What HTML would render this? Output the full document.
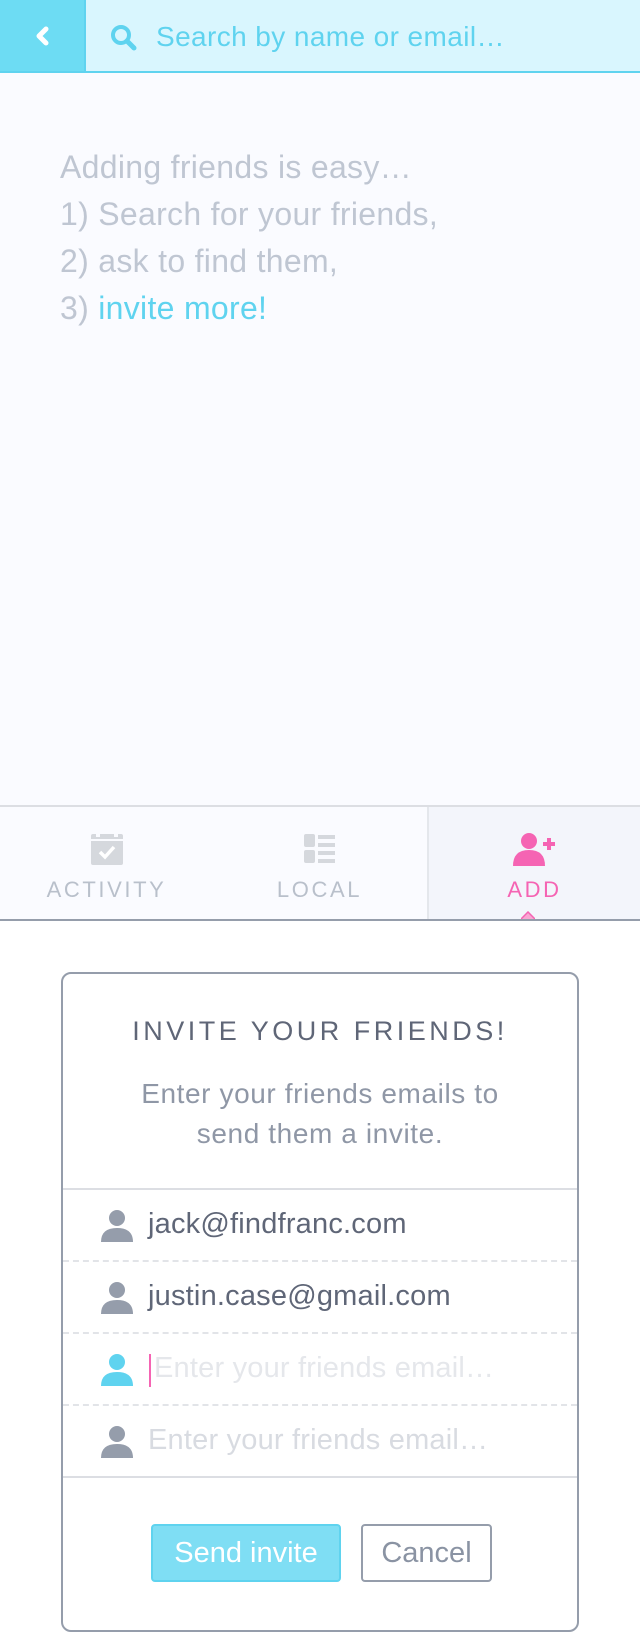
<!DOCTYPE html>
<html><head><meta charset="utf-8"><style>
*{margin:0;padding:0;box-sizing:border-box}
body{width:640px;height:1634px;background:#fff;font-family:"Liberation Sans",sans-serif;position:relative;overflow:hidden}
.top{position:absolute;left:0;top:0;width:640px;height:73px;background:#d9f6fe;border-bottom:2px solid #5fd3ef}
.back{position:absolute;left:0;top:0;width:86px;height:71px;background:#6ddcf3;border-right:2px solid #5fd3ef}
.ph{position:absolute;left:156px;top:21px;font-size:28px;color:#5fd3ef;letter-spacing:0.4px}
.main{position:absolute;left:0;top:73px;width:640px;height:732px;background:#fafbff}
.intro{position:absolute;left:60px;top:144px;font-size:32px;line-height:47px;color:#bfc6d2;letter-spacing:0.3px}
.intro span{color:#5fd3ef}
.tabs{position:absolute;left:0;top:805px;width:640px;height:116px;background:#fafbff;border-top:2px solid #dcdee3;border-bottom:2px solid #959dab}
.tab{position:absolute;top:0;width:213px;height:112px;text-align:center}
.tab .lbl{position:absolute;left:0;right:0;top:70px;font-size:22px;letter-spacing:2.6px;color:#b9c0cb}
.tab svg{position:absolute;left:50%;top:25px;transform:translateX(-50%)}
.card{position:absolute;left:61px;top:972px;width:518px;height:660px;border:2px solid #959dab;border-radius:10px;background:#fff}
.title{position:absolute;left:0;right:0;top:42px;text-align:center;font-size:27px;letter-spacing:3.5px;color:#5f6677}
.sub{position:absolute;left:0;right:0;top:100px;text-align:center;font-size:28px;line-height:40px;color:#8f97a6;letter-spacing:0.6px}
.row{position:absolute;left:0;width:514px;height:72px}
.row .t{position:absolute;left:85px;top:18px;font-size:29px;color:#5f6677;letter-spacing:0.2px}
.row svg{position:absolute;left:38px;top:19px}
.btn{position:absolute;top:550px;height:58px;border-radius:4px;font-size:29px;text-align:center;line-height:54px}
</style></head><body>
<div class="top">
 <div class="back"><svg width="86" height="71"><path d="M46 29 L39 36 L46 43" stroke="#fff" stroke-width="5" fill="none" stroke-linecap="round" stroke-linejoin="round"/></svg></div>
 <svg style="position:absolute;left:110px;top:24px" width="28" height="28"><circle cx="11" cy="11" r="8" stroke="#5fd3ef" stroke-width="4" fill="none"/><path d="M17 17 L24 24" stroke="#5fd3ef" stroke-width="5" stroke-linecap="round"/></svg>
 <div class="ph">Search by name or email…</div>
</div>
<div class="main"></div>
<div class="intro">Adding friends is easy…<br>1) Search for your friends,<br>2) ask to find them,<br>3) <span>invite more!</span></div>
<div class="tabs">
 <div class="tab" style="left:0"><svg width="34" height="34"><rect x="1" y="2" width="32" height="31" rx="2" fill="#d5d8dd"/><rect x="6" y="0" width="4" height="5" fill="#fafbff"/><rect x="24" y="0" width="4" height="5" fill="#fafbff"/><rect x="1" y="7" width="32" height="2" fill="#fafbff"/><path d="M10 20 L15 25 L24 15" stroke="#fff" stroke-width="3.5" fill="none"/></svg><div class="lbl">ACTIVITY</div></div>
 <div class="tab" style="left:213px"><svg width="34" height="34"><rect x="1" y="2" width="11" height="13" rx="2" fill="#d5d8dd"/><rect x="1" y="18" width="11" height="13" rx="2" fill="#d5d8dd"/><rect x="15" y="3" width="17" height="4" fill="#d5d8dd"/><rect x="15" y="11" width="17" height="4" fill="#d5d8dd"/><rect x="15" y="19" width="17" height="4" fill="#d5d8dd"/><rect x="15" y="27" width="17" height="4" fill="#d5d8dd"/></svg><div class="lbl">LOCAL</div></div>
 <div class="tab" style="left:427px;width:213px;border-left:2px solid #e4e7ec;background:#f3f5fb"><svg width="44" height="36" style="left:50%"><circle cx="16" cy="9" r="8" fill="#f564b3"/><path d="M0 34 Q0 18 16 18 Q32 18 32 34 Z" fill="#f564b3"/><path d="M36 6 V18 M30 12 H42" stroke="#f564b3" stroke-width="4"/></svg><div class="lbl" style="color:#f564b3">ADD</div>
 <svg style="position:absolute;left:99px;top:104px" width="14" height="8"><path d="M0 8 L7 1 L14 8" fill="#f9a6d3" stroke="#f564b3" stroke-width="1.5"/></svg></div>
</div>
<div class="card">
 <div class="title">INVITE YOUR FRIENDS!</div>
 <div class="sub">Enter your friends emails to<br>send them a invite.</div>
 <div style="position:absolute;left:0;right:0;top:214px;border-top:2px solid #dcdee3"></div>
 <div class="row" style="top:216px"><svg width="32" height="34"><circle cx="16" cy="9" r="8" fill="#959dab"/><path d="M0 33 Q0 19 16 19 Q32 19 32 33 Z" fill="#959dab"/></svg><div class="t">jack@findfranc.com</div></div>
 <div style="position:absolute;left:0;right:0;top:286px;border-top:2px dashed #e2e4e8"></div>
 <div class="row" style="top:288px"><svg width="32" height="34"><circle cx="16" cy="9" r="8" fill="#959dab"/><path d="M0 33 Q0 19 16 19 Q32 19 32 33 Z" fill="#959dab"/></svg><div class="t">justin.case@gmail.com</div></div>
 <div style="position:absolute;left:0;right:0;top:358px;border-top:2px dashed #e2e4e8"></div>
 <div class="row" style="top:360px"><svg width="32" height="34"><circle cx="16" cy="9" r="8" fill="#5fd3ef"/><path d="M0 33 Q0 19 16 19 Q32 19 32 33 Z" fill="#5fd3ef"/></svg><div style="position:absolute;left:86px;top:20px;width:2px;height:33px;background:#f564b3"></div><div class="t" style="left:91px;color:#e5e7eb">Enter your friends email…</div></div>
 <div style="position:absolute;left:0;right:0;top:430px;border-top:2px dashed #e2e4e8"></div>
 <div class="row" style="top:432px"><svg width="32" height="34"><circle cx="16" cy="9" r="8" fill="#959dab"/><path d="M0 33 Q0 19 16 19 Q32 19 32 33 Z" fill="#959dab"/></svg><div class="t" style="color:#d8dbe1">Enter your friends email…</div></div>
 <div style="position:absolute;left:0;right:0;top:502px;border-top:2px solid #dcdee3"></div>
 <div class="btn" style="left:88px;width:190px;background:#7fdef4;border:2px solid #5fd3ef;color:#fff">Send invite</div>
 <div class="btn" style="left:298px;width:131px;border:2px solid #959dab;color:#8a93a3">Cancel</div>
</div>
</body></html>
